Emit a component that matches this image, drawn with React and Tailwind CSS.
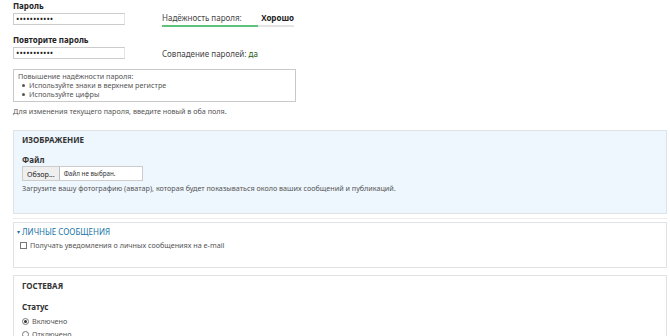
import React from "react";

const font = { fontFamily: '"Noto Sans", "DejaVu Sans", sans-serif' };

const PasswordRow = ({ label, children }) => (
  <div className="flex items-end">
    <div className="w-[149px] shrink-0">
      <div className="font-bold text-[8px] leading-[10px] text-[#222] mb-[2px]">{label}</div>
      <div className="w-[112px] h-[12px] border border-[#ccc] border-r-[#e4e4e4] bg-white pl-[2px] text-[9px] leading-[10px] text-[#222] overflow-hidden">
        •••••••••••
      </div>
    </div>
    {children}
  </div>
);

const Fieldset = ({ className, children }) => (
  <div className={"border border-[#dfe3e6] px-[8px] " + className}>{children}</div>
);

export default function App() {
  return (
    <div style={font} className="w-[670px] h-[336px] overflow-hidden bg-white text-[#494949] text-[7.2px] leading-[10px]">
      <div className="pl-[13px] pt-[1px]">
        <PasswordRow label="Пароль">
          <div className="w-[132px] translate-y-[2px]">
            <div className="flex justify-between text-[8px] leading-[10px] text-[#444]">
              <span>Надёжность пароля:</span>
              <span className="font-bold text-[#222]">Хорошо</span>
            </div>
            <div className="h-[2px] mt-[2px] bg-[#e3e3e3] flex">
              <div className="w-[96px] bg-[#5fc27a]" />
            </div>
          </div>
        </PasswordRow>
        <div className="h-[10px]" />
        <PasswordRow label="Повторите пароль">
          <div className="text-[8px] leading-[10px] text-[#444]">
            Совпадение паролей: <span className="text-[#2b5d12]">да</span>
          </div>
        </PasswordRow>
        <div className="w-[283px] mt-[10px] border border-[#c9c9c9] px-[4px] py-[2px] leading-[9px] text-[#555]">
          <div>Повышение надёжности пароля:</div>
          <ul className="pl-[4px]">
            <li className="flex items-center gap-[4px]"><span className="w-[3px] h-[3px] rounded-full bg-[#555]" />Используйте знаки в верхнем регистре</li>
            <li className="flex items-center gap-[4px]"><span className="w-[3px] h-[3px] rounded-full bg-[#555]" />Используйте цифры</li>
          </ul>
        </div>
        <div className="mt-[4px] text-[#555]">Для изменения текущего пароля, введите новый в оба поля.</div>
      </div>

      <div className="ml-[13px] w-[654px] mt-[14px] flex flex-col">
        <Fieldset className="bg-[#eff7fe] h-[84px] pt-[4px]">
          <div className="font-bold text-[8px] text-[#333] uppercase">Изображение</div>
          <div className="font-bold text-[8px] text-[#333] mt-[10px]">Файл</div>
          <div className="flex items-stretch mt-[1px] w-[121px] h-[15px] border border-[#ccc] bg-white">
            <div className="px-[4px] bg-[#efefef] border-r border-[#bbb] flex items-center text-[7.2px] text-[#222]">Обзор...</div>
            <div className="px-[4px] flex items-center text-[6.3px] text-[#333]">Файл не выбран.</div>
          </div>
          <div className="mt-[2px] text-[#555]">Загрузите вашу фотографию (аватар), которая будет показываться около ваших сообщений и публикаций.</div>
        </Fieldset>

        <div className="h-[5px] border-b border-[#f1ece6]" />

        <Fieldset className="h-[46px] mt-[3px] pt-[4px] pl-[3px]">
          <div className="flex items-center gap-[2px] text-[8px] text-[#1b75a8] uppercase">
            <span className="text-[6px]">▾</span>ЛИЧНЫЕ СООБЩЕНИЯ
          </div>
          <label className="flex items-center gap-[3px] mt-[3px] pl-[3px] text-[#555]">
            <span className="w-[7px] h-[7px] border border-[#777] bg-white" />
            Получать уведомления о личных сообщениях на e-mail
          </label>
        </Fieldset>

        <Fieldset className="mt-[7px] h-[80px] pt-[5px]">
          <div className="font-bold text-[8px] text-[#333] uppercase">Гостевая</div>
          <div className="font-bold text-[8px] text-[#333] mt-[11px]">Статус</div>
          <label className="flex items-center gap-[3px] mt-[4px] text-[#555]">
            <span className="w-[7px] h-[7px] rounded-full border border-[#777] bg-white flex items-center justify-center">
              <span className="w-[3px] h-[3px] rounded-full bg-[#333]" />
            </span>
            Включено
          </label>
          <label className="flex items-center gap-[3px] mt-[3px] text-[#555]">
            <span className="w-[7px] h-[7px] rounded-full border border-[#777] bg-white" />
            Отключено
          </label>
        </Fieldset>
      </div>
    </div>
  );
}
